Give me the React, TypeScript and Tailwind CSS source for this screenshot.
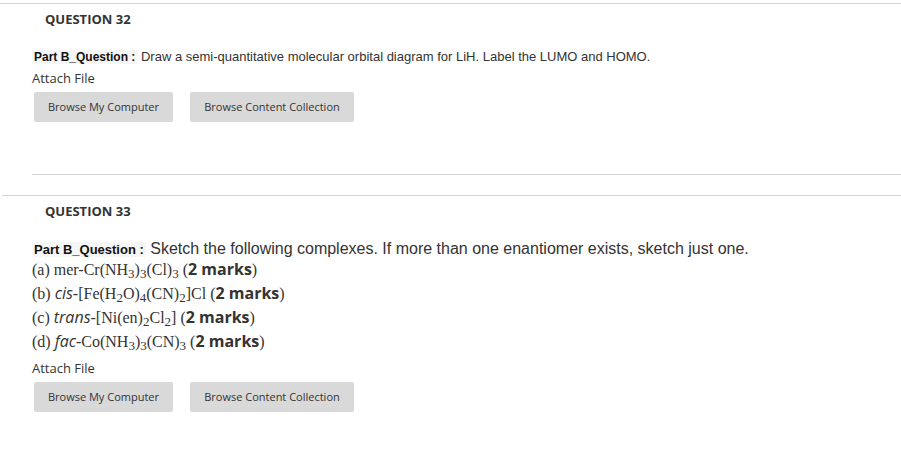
const Sub = ({ children }: { children: React.ReactNode }) => (
  <span className="text-[13px] leading-none align-[-3px]">{children}</span>
);

const Em = ({ children }: { children: React.ReactNode }) => (
  <span className="font-['Open_Sans'] italic leading-none">{children}</span>
);

const Marks = () => (
  <>
    {' '}(<span className="font-['Open_Sans'] font-bold leading-none">2 marks</span>)
  </>
);

const AttachFile = () => (
  <div>
    <p className="font-['Open_Sans'] text-[13px] leading-[18px] text-[#333]">Attach File</p>
    <div className="mt-[5px] flex gap-[17px] pl-[2px]">
      <button className="h-[30px] w-[139px] rounded-[2px] bg-[#d9d9d9] font-['Open_Sans'] text-[11px] text-[#333]">
        Browse My Computer
      </button>
      <button className="h-[30px] w-[164px] rounded-[2px] bg-[#d9d9d9] font-['Open_Sans'] text-[11px] text-[#333]">
        Browse Content Collection
      </button>
    </div>
  </div>
);

const PartLabel = ({ size }: { size: 'sm' | 'md' }) => (
  <span
    className={
      size === 'sm'
        ? "bg-[#f6f6f6] px-[2px] font-['Liberation_Sans',Arial,sans-serif] text-[12px] font-bold text-[#111]"
        : "bg-[#f6f6f6] px-[2px] font-['Liberation_Sans',Arial,sans-serif] text-[13px] font-bold text-[#111]"
    }
  >
    Part B_Question :
  </span>
);

export default function App() {
  return (
    <div className="min-h-screen bg-white pt-[3px] text-[#333]">
      <section className="border-t border-[#d4d4d4]">
        <h2 className="pl-[45px] pt-[6px] font-['Open_Sans'] text-[13px] font-bold leading-[18px] text-[#333]">
          QUESTION 32
        </h2>
        <div className="ml-[32px] border-b border-[#d4d4d4] pb-[52px] pt-[20px]">
          <p className="font-['Liberation_Sans',Arial,sans-serif] text-[13px] leading-[17px]">
            <PartLabel size="sm" /> Draw a semi-quantitative molecular orbital diagram for LiH. Label the LUMO and HOMO.
          </p>
          <div className="mt-[3px]">
            <AttachFile />
          </div>
        </div>
      </section>

      <section className="mt-[20px] ml-[2px] border-t border-[#d4d4d4]">
        <h2 className="pl-[43px] pt-[6px] font-['Open_Sans'] text-[13px] font-bold leading-[18px] text-[#333]">
          QUESTION 33
        </h2>
        <div className="ml-[30px] pt-[21px]">
          <p className="font-['Liberation_Sans',Arial,sans-serif] text-[16px] leading-[16px]">
            <PartLabel size="md" /> Sketch the following complexes. If more than one enantiomer exists, sketch just one.
          </p>
          <div className="font-['Liberation_Serif','Times_New_Roman',serif] text-[16px] leading-[24px] text-[#333]">
            <p>
              (a) mer-Cr(NH<Sub>3</Sub>)<Sub>3</Sub>(Cl)<Sub>3</Sub>
              <Marks />
            </p>
            <p>
              (b) <Em>cis</Em>-[Fe(H<Sub>2</Sub>O)<Sub>4</Sub>(CN)<Sub>2</Sub>]Cl
              <Marks />
            </p>
            <p>
              (c) <Em>trans</Em>-[Ni(en)<Sub>2</Sub>Cl<Sub>2</Sub>]
              <Marks />
            </p>
            <p>
              (d) <Em>fac</Em>-Co(NH<Sub>3</Sub>)<Sub>3</Sub>(CN)<Sub>3</Sub>
              <Marks />
            </p>
          </div>
          <div className="mt-[5px]">
            <AttachFile />
          </div>
        </div>
      </section>
    </div>
  );
}
